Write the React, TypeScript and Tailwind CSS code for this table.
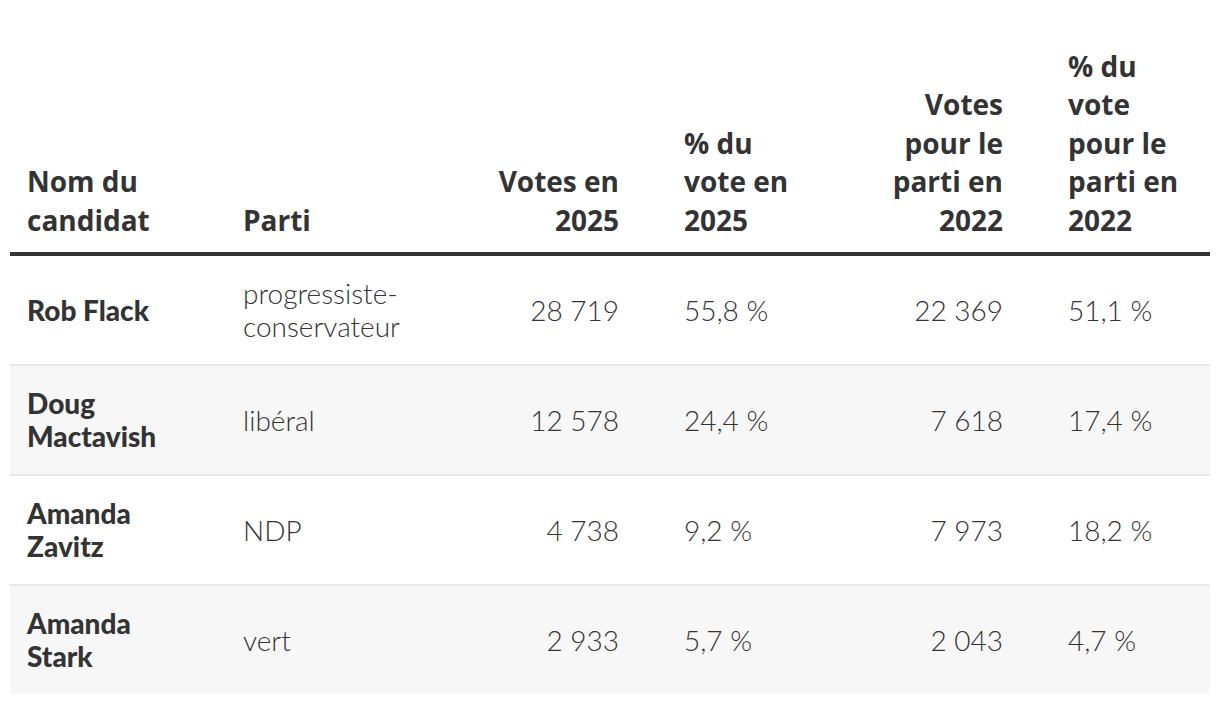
import React from 'react';

type Row = {
  name: string[];
  party: string[];
  votes: string;
  pct: string;
  prevVotes: string;
  prevPct: string;
};

const rows: Row[] = [
  { name: ['Rob Flack'], party: ['progressiste-', 'conservateur'], votes: '28\u00a0719', pct: '55,8 %', prevVotes: '22\u00a0369', prevPct: '51,1 %' },
  { name: ['Doug', 'Mactavish'], party: ['libéral'], votes: '12\u00a0578', pct: '24,4 %', prevVotes: '7\u00a0618', prevPct: '17,4 %' },
  { name: ['Amanda', 'Zavitz'], party: ['NDP'], votes: '4\u00a0738', pct: '9,2 %', prevVotes: '7\u00a0973', prevPct: '18,2 %' },
  { name: ['Amanda', 'Stark'], party: ['vert'], votes: '2\u00a0933', pct: '5,7 %', prevVotes: '2\u00a0043', prevPct: '4,7 %' },
];

const bold = { fontFamily: '"Open Sans", "Noto Sans", sans-serif' };

const Lines = ({ lines }: { lines: string[] }) => (
  <>
    {lines.map((l, i) => (
      <span key={i} className="block whitespace-nowrap">{l}</span>
    ))}
  </>
);

const App: React.FC = () => {
  return (
    <div className="min-h-[704px] bg-white px-[10px] pt-[47px] text-[#333]" style={{ fontFamily: 'Lato, "Open Sans", sans-serif' }}>
      <table className="w-[1200px] table-fixed border-collapse text-[28px]">
        <colgroup>
          <col className="w-[216px]" />
          <col className="w-[226px]" />
          <col className="w-[215px]" />
          <col className="w-[184px]" />
          <col className="w-[200px]" />
          <col className="w-[159px]" />
        </colgroup>
        <thead style={bold}>
          <tr className="border-b-4 border-[#333] font-bold leading-[38.4px]">
            <th className="px-[17px] pb-[13px] text-left align-bottom font-bold"><Lines lines={['Nom du', 'candidat']} /></th>
            <th className="px-[17px] pb-[13px] text-left align-bottom font-bold"><Lines lines={['Parti']} /></th>
            <th className="pl-[17px] pr-[48px] pb-[13px] text-right align-bottom font-bold"><Lines lines={['Votes en', '2025']} /></th>
            <th className="px-[17px] pb-[13px] text-left align-bottom font-bold"><Lines lines={['% du', 'vote en', '2025']} /></th>
            <th className="pl-[17px] pr-[48px] pb-[13px] text-right align-bottom font-bold"><Lines lines={['Votes', 'pour le', 'parti en', '2022']} /></th>
            <th className="px-[17px] pb-[13px] text-left align-bottom font-bold"><Lines lines={['% du', 'vote', 'pour le', 'parti en', '2022']} /></th>
          </tr>
        </thead>
        <tbody>
          {rows.map((r, i) => (
            <tr key={i} className={`leading-[33px] ${i % 2 === 1 ? 'bg-[#f7f7f7]' : 'bg-white'} ${i < rows.length - 1 ? 'border-b-2 border-[#e8e8e8]' : ''}`}>
              <td className="px-[17px] py-[21px] align-middle font-black"><Lines lines={r.name} /></td>
              <td className="px-[17px] py-[21px] align-middle font-light"><Lines lines={r.party} /></td>
              <td className="pl-[17px] pr-[48px] py-[21px] text-right align-middle font-light">{r.votes}</td>
              <td className="px-[17px] py-[21px] align-middle font-light">{r.pct}</td>
              <td className="pl-[17px] pr-[48px] py-[21px] text-right align-middle font-light">{r.prevVotes}</td>
              <td className="px-[17px] py-[21px] align-middle font-light">{r.prevPct}</td>
            </tr>
          ))}
        </tbody>
      </table>
    </div>
  );
};

export default App;
